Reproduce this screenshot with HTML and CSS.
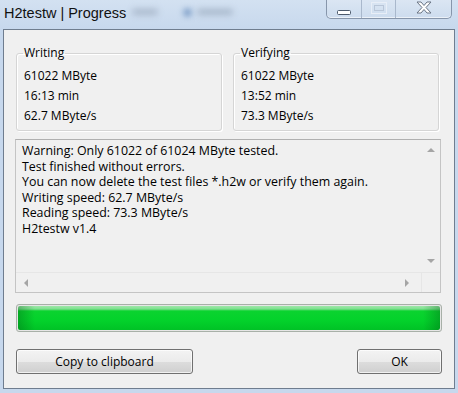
FILE: index.html
```html
<!DOCTYPE html>
<html lang="en">
<head>
  <meta charset="UTF-8">
  <title>H2testw | Progress</title>
  <link rel="stylesheet" href="styles.css">
</head>
<body>

  <div class="titlebar">
    <span class="title">H2testw | Progress</span>
    <span class="haze haze-a"></span>
    <span class="haze haze-dot"></span>
    <span class="haze haze-b"></span>
    <div class="caption">
      <span class="cap cap-min">
        <svg width="14" height="5" viewBox="0 0 14 5"><rect x="0.5" y="0.5" width="13" height="4" rx="1" fill="#fff" stroke="#4d5a6c"/></svg>
      </span>
      <span class="cap cap-max">
        <svg width="16" height="12" viewBox="0 0 16 12"><rect x="0.5" y="0.5" width="15" height="11" fill="none" stroke="#e8eef7"/><rect x="3.5" y="3.5" width="9" height="5" fill="none" stroke="#b9c6d8"/></svg>
      </span>
      <span class="cap cap-close">
        <svg width="16" height="13" viewBox="0 0 16 13"><path d="M1 1h4l3 3.5 3-3.5h4l-5 5.5 5 5.5h-4l-3-3.5-3 3.5h-4l5-5.5z" fill="#fff" stroke="#6a7585" stroke-linejoin="round"/></svg>
      </span>
    </div>
  </div>

  <div class="client">
    <div class="groups">
      <fieldset class="group">
        <legend>Writing</legend>
        <div class="row">61022 MByte</div>
        <div class="row">16:13 min</div>
        <div class="row">62.7 MByte/s</div>
      </fieldset>
      <fieldset class="group">
        <legend>Verifying</legend>
        <div class="row">61022 MByte</div>
        <div class="row">13:52 min</div>
        <div class="row">73.3 MByte/s</div>
      </fieldset>
    </div>

    <div class="log">
      <div class="log-main">
        <div class="log-text">
          <div>Warning: Only 61022 of 61024 MByte tested.</div>
          <div>Test finished without errors.</div>
          <div>You can now delete the test files *.h2w or verify them again.</div>
          <div>Writing speed: 62.7 MByte/s</div>
          <div>Reading speed: 73.3 MByte/s</div>
          <div>H2testw v1.4</div>
        </div>
        <div class="vscroll">
          <span class="arrow arrow-up"></span>
          <span class="arrow arrow-down"></span>
        </div>
      </div>
      <div class="log-bottom">
        <div class="hscroll">
          <span class="arrow arrow-left"></span>
          <span class="arrow arrow-right"></span>
        </div>
        <div class="corner"></div>
      </div>
    </div>

    <div class="progress">
      <div class="progress-fill"></div>
    </div>

    <div class="buttons">
      <button class="btn btn-copy">Copy to clipboard</button>
      <button class="btn btn-ok">OK</button>
    </div>
  </div>

</body>
</html>
```

FILE: styles.css
```css
/* janela estilo Windows 7 */
body {
  margin: 0;
  width: 458px;
  height: 393px;
  overflow: hidden;
  background-color: #c7d8ed;
  font-family: 'Open Sans', 'Liberation Sans', sans-serif;
  font-size: 12px;
  color: #000;
}

.titlebar {
  height: 29px;
  display: flex;
  align-items: flex-start;
  background: linear-gradient(to bottom, #d3e1f1, #c7d8ed);
  overflow: hidden;
}

.title {
  padding-left: 4px;
  font-family: 'Liberation Sans', Arial, sans-serif;
  font-size: 14.5px;
  line-height: 26px;
  color: #111;
  white-space: nowrap;
}

/* fundo desfocado do vidro */
.haze {
  display: block;
  filter: blur(3px);
  margin-top: 9px;
  height: 6px;
  border-radius: 3px;
}

.haze-a {
  width: 26px;
  margin-left: 6px;
  background-color: #a9b8cb;
}

.haze-dot {
  width: 7px;
  height: 7px;
  margin-left: 26px;
  background-color: #5f86b8;
}

.haze-b {
  width: 36px;
  margin-left: 6px;
  background-color: #a7b7ca;
}

.caption {
  margin-left: auto;
  margin-right: 6px;
  width: 124px;
  height: 18px;
  display: flex;
  border: 1px solid #8796ab;
  border-top: none;
  border-radius: 0 0 5px 5px;
  background: linear-gradient(to bottom, #dbe6f3, #cddcee);
  box-shadow: inset 0 -1px 0 rgba(255, 255, 255, 0.6);
}

.cap {
  display: flex;
  align-items: center;
  justify-content: center;
}

.cap-min {
  width: 34px;
  border-right: 1px solid #a9b8cc;
  padding-top: 6px;
}

.cap-max {
  width: 33px;
  border-right: 1px solid #a9b8cc;
  padding-bottom: 3px;
}

.cap-close {
  flex: 1;
  padding-bottom: 3px;
}

.client {
  margin-left: 3px;
  width: 452px;
  height: 360px;
  box-sizing: border-box;
  border: 1px solid #6f7d8f;
  background-color: #f0f0f0;
  padding: 15px 12px 0 12px;
}

.groups {
  display: grid;
  grid-template-columns: 206px 206px;
  gap: 11px;
}

.group {
  margin: 0;
  padding: 5px 7px 4px 7px;
  border: 1px solid #d5d5d5;
  border-radius: 3px;
  box-shadow: inset 1px 1px 0 #fff, 1px 1px 0 #fff;
}

.group legend {
  padding: 0 1px;
  margin-left: -1px;
  line-height: 16px;
}

.row {
  line-height: 20px;
}

.log {
  margin: 8px 0 0 -1px;
  width: 426px;
  height: 154px;
  box-sizing: border-box;
  border: 1px solid #c4c4c4;
  border-top-color: #b0b0b0;
  display: flex;
  flex-direction: column;
}

.log-main {
  flex: 1;
  display: flex;
}

.log-text {
  flex: 1;
  padding: 3px 6px;
  font-size: 12.4px;
  line-height: 15.6px;
  white-space: nowrap;
}

.vscroll {
  width: 18px;
  display: flex;
  flex-direction: column;
  justify-content: space-between;
  align-items: center;
  padding: 8px 0 9px;
}

.log-bottom {
  height: 19px;
  display: flex;
  border-top: 1px solid #e6e6e6;
}

.hscroll {
  flex: 1;
  display: flex;
  justify-content: space-between;
  align-items: center;
  padding: 0 12px 0 8px;
  border-right: 1px solid #e6e6e6;
}

.corner {
  width: 18px;
}

.arrow {
  width: 0;
  height: 0;
  border: 4px solid transparent;
}

.arrow-up {
  border-top: none;
  border-bottom: 4px solid #a5a5a5;
}

.arrow-down {
  border-bottom: none;
  border-top: 4px solid #a5a5a5;
}

.arrow-left {
  border-left: none;
  border-right: 4px solid #a5a5a5;
}

.arrow-right {
  border-right: none;
  border-left: 4px solid #a5a5a5;
}

.progress {
  margin-top: 11px;
  height: 28px;
  box-sizing: border-box;
  border: 1px solid #a8b0a8;
  border-radius: 3px;
  background-color: #e6e6e6;
  padding: 1px;
}

.progress-fill {
  height: 100%;
  border-radius: 2px;
  background:
    linear-gradient(to right, rgba(0, 90, 20, 0.35), rgba(0, 90, 20, 0) 4%, rgba(0, 90, 20, 0) 96%, rgba(0, 90, 20, 0.35)),
    linear-gradient(to bottom, #9ce8a8 0, #7fdf8f 3px, #0bd32f 5px, #03d22b 60%, #00c226 100%);
}

.buttons {
  margin-top: 17px;
  display: flex;
  justify-content: space-between;
}

.btn {
  height: 25px;
  padding: 0;
  border: 1px solid #707070;
  border-radius: 3px;
  background: linear-gradient(to bottom, #f3f3f3 0, #ebebeb 50%, #dddddd 50%, #cfcfcf 100%);
  box-shadow: inset 0 0 0 1px rgba(255, 255, 255, 0.7);
  font-family: 'Open Sans', 'Liberation Sans', sans-serif;
  font-size: 12px;
  color: #000;
}

.btn-copy {
  width: 177px;
}

.btn-ok {
  width: 85px;
}
```
